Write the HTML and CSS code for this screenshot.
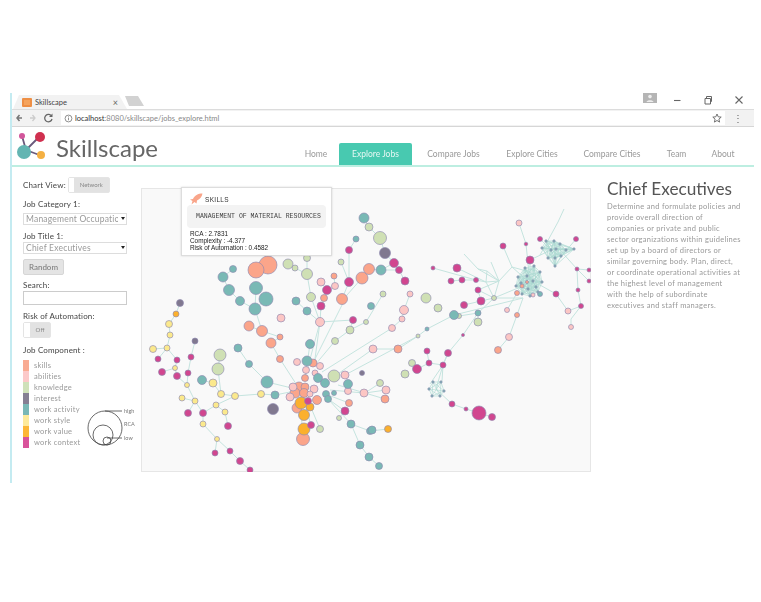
FILE: index.html
```html
<!DOCTYPE html>
<html lang="en">

<head>
    <meta charset="UTF-8">
    <title>Skillscape</title>
    <link rel="stylesheet" href="styles.css">
</head>

<body>

    <div class="window">
        <!-- Browser chrome -->
        <div class="tabstrip">
            <div class="tab">
                <span class="favicon"></span>
                <span class="tab-title">Skillscape</span>
                <span class="tab-close">×</span>
            </div>
            <div class="new-tab"></div>
            <div class="window-controls">
                <svg class="profile" viewBox="0 0 14 10"><rect width="14" height="10" fill="#b5b5b5"/><circle cx="7" cy="3.6" r="1.8" fill="#eee"/><path d="M3.5 9c.4-2.400 6.600-2.400 7 0z" fill="#eee"/></svg>
                <svg class="ctrl" viewBox="0 0 10 10"><path d="M2 5.500h6.500" stroke="#666" stroke-width="1.100"/></svg>
                <svg class="ctrl" viewBox="0 0 10 10"><path d="M2 3.500h5.500v5.500h-5.500zM3.500 3.500v-2h5v5h-1" fill="none" stroke="#666"/></svg>
                <svg class="ctrl" viewBox="0 0 10 10"><path d="M1.500 1.500l7 7M8.500 1.500l-7 7" stroke="#666" stroke-width="1.100"/></svg>
            </div>
        </div>
        <div class="toolbar">
            <svg class="nav-icons" viewBox="0 0 42 12"><path d="M7 6H2M4.500 3L2 6l2.500 3" fill="none" stroke="#777" stroke-width="1.500"/><path d="M20 6h-5M17.500 3L20 6l-2.500 3" fill="none" stroke="#ccc" stroke-width="1.300"/><path d="M36 3.500A3.700 3.700 0 1 0 37 7" fill="none" stroke="#666" stroke-width="1.300"/><path d="M37.500 1.500v3.500H34z" fill="#666"/></svg>
            <div class="urlbar">
                <svg class="info" viewBox="0 0 10 10"><circle cx="5" cy="5" r="3.800" fill="none" stroke="#666" stroke-width=".8"/><path d="M5 4v3M5 2.600v.8" stroke="#666" stroke-width=".8"/></svg>
                <span class="url"><b>localhost</b>:8080/skillscape/jobs_explore.html</span>
                <svg class="star" viewBox="0 0 10 10"><path d="M5 1l1.200 2.800 3 .3-2.300 2 .7 3L5 7.500 2.400 9.100l.7-3-2.300-2 3-.3z" fill="none" stroke="#666" stroke-width=".9"/></svg>
            </div>
            <span class="menu-dots">⋮</span>
        </div>

        <!-- App header -->
        <div class="header">
            <div class="brand">
                <svg class="logo" viewBox="0 0 32 30">
                    <path d="M5 5l4 14M23 5L9 19M9 19l16 6" stroke="#6a5a7c" stroke-width="1.800" fill="none"/>
                    <circle cx="5" cy="5" r="3" fill="#d2569b"/>
                    <circle cx="23" cy="6" r="5" fill="#d0304f"/>
                    <circle cx="7" cy="21" r="7" fill="#63b5b2"/>
                    <circle cx="24" cy="24" r="4" fill="#f4b042"/>
                </svg>
                <span class="brand-name">Skillscape</span>
            </div>
            <div class="nav">
                <a class="nav-link nav-home">Home</a>
                <a class="nav-link active">Explore Jobs</a>
                <a class="nav-link nav-cjobs">Compare Jobs</a>
                <a class="nav-link nav-ecities">Explore Cities</a>
                <a class="nav-link nav-ccities">Compare Cities</a>
                <a class="nav-link nav-team">Team</a>
                <a class="nav-link nav-about">About</a>
            </div>
        </div>

        <div class="main">
            <!-- Controls -->
            <div class="sidebar">
                <div class="chart-view">
                    <span class="field-label">Chart View:</span>
                    <div class="toggle toggle-network"><span class="knob"></span><span class="toggle-text">Network</span></div>
                </div>
                <div class="field-label gap-6">Job Category 1:</div>
                <div class="picker-wrap gap-4"><select class="picker"><option>Management Occupations</option></select></div>
                <div class="field-label gap-6">Job Title 1:</div>
                <div class="picker-wrap gap-1"><select class="picker"><option>Chief Executives</option></select></div>
                <button class="random-btn">Random</button>
                <div class="field-label gap-5">Search:</div>
                <input class="search gap-1" type="text">
                <div class="field-label gap-6">Risk of Automation:</div>
                <div class="toggle toggle-off gap-1"><span class="knob"></span><span class="toggle-text">Off</span></div>
                <div class="field-label gap-7">Job Component :</div>
                <div class="legend">
                    <ul class="legend-list">
                        <li><i class="swatch c-skills"></i>skills</li>
                        <li><i class="swatch c-abilities"></i>abilities</li>
                        <li><i class="swatch c-knowledge"></i>knowledge</li>
                        <li><i class="swatch c-interest"></i>interest</li>
                        <li><i class="swatch c-activity"></i>work activity</li>
                        <li><i class="swatch c-style"></i>work style</li>
                        <li><i class="swatch c-value"></i>work value</li>
                        <li><i class="swatch c-context"></i>work context</li>
                    </ul>
                    <svg class="size-key" viewBox="0 0 54 40">
                        <g fill="none" stroke="#444" stroke-width=".8">
                            <circle cx="18" cy="20" r="17"/>
                            <circle cx="16" cy="27" r="10"/>
                            <circle cx="20" cy="33" r="4"/>
                            <path d="M18 3h17M20 30h15"/>
                        </g>
                        <text x="37" y="5">high</text>
                        <text x="37" y="18">RCA</text>
                        <text x="37" y="32">low</text>
                    </svg>
                </div>
            </div>

            <!-- Network -->
            <div class="chart">
                <svg id="graph" class="graph" viewBox="141 188 450 284"></svg>
                <div class="tip">
                    <div class="tip-head">
                        <svg class="rocket" viewBox="0 0 14 12"><path d="M13.500.5C9 .5 5.500 2.500 4 6L1 6.500 3.500 8 2.500 11.500 5.500 9l2 1.500.5-3C11 6 13 4 13.500.5z" fill="#f9a58a"/></svg>
                        <span>SKILLS</span>
                    </div>
                    <div class="tip-box">MANAGEMENT OF MATERIAL RESOURCES</div>
                    <div class="tip-stats">RCA : 2.7831<br>Complexity : -4.377<br>Risk of Automation : 0.4582</div>
                </div>
            </div>

            <!-- Description -->
            <div class="details">
                <h2 class="job-title">Chief Executives</h2>
                <p class="job-text">Determine and formulate policies and<br>provide overall direction of<br>companies or private and public<br>sector organizations within guidelines<br>set up by a board of directors or<br>similar governing body. Plan, direct,<br>or coordinate operational activities at<br>the highest level of management<br>with the help of subordinate<br>executives and staff managers.</p>
            </div>
        </div>
    </div>

    <script src="graph.js"></script>
</body>

</html>
```
FILE: styles.css
```css
* {
    box-sizing: border-box;
}

body {
    font-family: Lato, Arial, sans-serif;
    margin: 0;
    padding: 93px 0 0 10px;
    background-color: #fff;
    color: #555;
}

.window {
    width: 744px;
    height: 390px;
    border-left: 2px solid #c4ebf1;
    filter: blur(0.7px);
}

/* Browser chrome */
.tabstrip {
    display: flex;
    align-items: flex-end;
    height: 16px;
    position: relative;
}

.tab {
    display: flex;
    align-items: center;
    width: 114px;
    height: 14px;
    margin-left: 1px;
    padding: 0 9px 0 9px;
    background-color: #f2f2f2;
    clip-path: polygon(0 100%, 6px 0, 106px 0, 100% 100%);
    font-size: 7.5px;
    color: #444;
}

.favicon {
    width: 10px;
    height: 9px;
    margin-right: 3px;
    background-color: #f5a45e;
    border: 2px solid #ee8f45;
    border-radius: 1px;
}

.tab-title {
    flex: 1;
}

.tab-close {
    font-size: 9px;
    color: #666;
}

.new-tab {
    width: 19px;
    height: 10px;
    margin: 0 0 3px -2px;
    background-color: #d2d2d2;
    clip-path: polygon(0 0, 13px 0, 100% 100%, 4px 100%);
}

.window-controls {
    position: absolute;
    top: 0;
    right: 0;
    display: flex;
    align-items: flex-start;
    padding-right: 10px;
}

.profile {
    width: 14px;
    height: 10px;
    margin-right: 15px;
}

.ctrl {
    width: 10px;
    height: 10px;
    margin: 2px 0 0 0;
}

.ctrl + .ctrl {
    margin-left: 21px;
}

.toolbar {
    display: flex;
    align-items: center;
    height: 18px;
    background-color: #f2f2f2;
    border-top: 1px solid #dcdcdc;
    border-bottom: 1px solid #d6d6d6;
}

.nav-icons {
    width: 42px;
    height: 12px;
    margin-left: 3px;
    margin-right: 4px;
}

.urlbar {
    display: flex;
    align-items: center;
    width: 664px;
    height: 14px;
    padding: 0 3px;
    background-color: #fff;
    font-size: 7.5px;
    color: #888;
}

.info {
    width: 9px;
    height: 9px;
    margin-right: 2px;
}

.url {
    flex: 1;
}

.url b {
    font-weight: 400;
    color: #333;
}

.star {
    width: 10px;
    height: 10px;
}

.menu-dots {
    margin-left: 8px;
    font-size: 10px;
    line-height: 10px;
    color: #666;
}

/* App header */
.header {
    display: flex;
    justify-content: space-between;
    align-items: flex-end;
    height: 40px;
    border-bottom: 2px solid #bdeee1;
}

.brand {
    display: flex;
    align-items: center;
    height: 36px;
    margin-left: 5px;
}

.logo {
    width: 32px;
    height: 30px;
    margin-bottom: 2px;
}

.brand-name {
    margin-left: 7px;
    font-size: 24px;
    font-weight: 400;
    color: #666;
}

.nav {
    display: flex;
    height: 22px;
    margin-right: 19px;
}

.nav-link {
    display: flex;
    align-items: center;
    justify-content: center;
    font-size: 8.5px;
    color: #999;
}

.active {
    width: 73px;
    margin-left: 11px;
    background-color: #48c9b0;
    border-radius: 2px 2px 0 0;
    color: #e6f7f3;
}

.nav-home { width: 24px; }
.nav-cjobs { width: 55px; margin-left: 14px; }
.nav-ecities { width: 52px; margin-left: 25px; }
.nav-ccities { width: 58px; margin-left: 25px; }
.nav-team { width: 21px; margin-left: 25px; }
.nav-about { width: 24px; margin-left: 24px; }

/* Layout */
.main {
    display: flex;
    align-items: flex-start;
    height: 316px;
}

.sidebar {
    width: 129px;
    padding: 10px 0 0 11px;
}

.field-label {
    display: block;
    font-size: 8px;
    line-height: 10px;
    letter-spacing: 0.15px;
    color: #444;
}

.gap-1 { margin-top: 1px; }
.gap-4 { margin-top: 4px; }
.gap-5 { margin-top: 5px; }
.gap-6 { margin-top: 6px; }
.gap-7 { margin-top: 7px; }

.chart-view {
    display: flex;
    align-items: center;
    height: 16px;
}

.toggle {
    display: flex;
    height: 16px;
    background-color: #e2e2e2;
    border: 1px solid #e4e4e4;
    border-radius: 2px;
}

.toggle-network {
    width: 42px;
    margin-left: 2px;
}

.toggle-off {
    width: 28px;
}

.knob {
    width: 5px;
    background-color: #fff;
}

.toggle-off .knob {
    width: 6px;
}

.toggle-text {
    flex: 1;
    font-size: 6px;
    line-height: 14px;
    text-align: center;
    color: #888;
}

.picker-wrap {
    position: relative;
    width: 104px;
    height: 12px;
}

.picker-wrap::after {
    content: "";
    position: absolute;
    top: 4px;
    right: 2px;
    border: 2px solid transparent;
    border-top: 3px solid #222;
    border-bottom: 0;
}

.picker {
    display: block;
    width: 100%;
    height: 12px;
    padding: 0 8px 0 2px;
    appearance: none;
    background-color: #fff;
    border: 1px solid #ddd;
    border-radius: 0;
    font-family: inherit;
    font-size: 8.5px;
    letter-spacing: 0.2px;
    color: #999;
}

.random-btn {
    display: block;
    width: 41px;
    height: 16px;
    margin-top: 5px;
    padding: 0;
    background-color: #e4e4e4;
    border: 1px solid #d6d6d6;
    border-radius: 2px;
    font-family: inherit;
    font-size: 8px;
    color: #777;
}

.search {
    display: block;
    width: 104px;
    height: 14px;
    padding: 0;
    background-color: #fff;
    border: 1px solid #ccc;
}

.legend {
    display: flex;
    align-items: flex-end;
    margin-top: 5px;
}

.legend-list {
    width: 65px;
    margin: 0;
    padding: 0;
    list-style: none;
}

.legend-list li {
    display: flex;
    align-items: center;
    height: 11px;
    font-size: 7.5px;
    letter-spacing: 0.25px;
    color: #999;
}

.swatch {
    width: 6px;
    height: 11px;
    margin-right: 5px;
}

.c-skills { background-color: #f9ab92; }
.c-abilities { background-color: #fcc9c9; }
.c-knowledge { background-color: #cfe1b9; }
.c-interest { background-color: #857f93; }
.c-activity { background-color: #79b8b6; }
.c-style { background-color: #fdea9b; }
.c-value { background-color: #fcb737; }
.c-context { background-color: #d9539b; }

.size-key {
    width: 54px;
    height: 40px;
    flex-shrink: 0;
}

.size-key text {
    font-size: 5.5px;
    fill: #777;
}

/* Network */
.chart {
    position: relative;
    width: 450px;
    height: 284px;
    margin-top: 21px;
    background-color: #f9f9f9;
    border: 1px solid #e6e6e6;
}

.graph {
    position: absolute;
    top: -1px;
    left: -1px;
    width: 450px;
    height: 284px;
}

.graph .edge {
    fill: none;
    stroke: #c5e4df;
    stroke-width: 1;
}

.graph .mesh {
    stroke: #a9d8d0;
    stroke-width: 0.6;
}

.graph circle {
    stroke: #8f8ab0;
    stroke-opacity: 0.65;
    stroke-width: 1;
}

.graph .sk { fill: #fba58a; }
.graph .ab { fill: #fcc6c4; }
.graph .kn { fill: #cfe0b4; }
.graph .in { fill: #80788f; }
.graph .ac { fill: #79b9b5; }
.graph .st { fill: #fbe98c; }
.graph .va { fill: #fbb02d; }
.graph .co { fill: #d1468f; }

.tip {
    position: absolute;
    top: -2px;
    left: 39px;
    width: 151px;
    height: 69px;
    padding: 5px;
    background-color: #fff;
    border: 1px solid #ddd;
    box-shadow: 0 0 2px rgba(0, 0, 0, 0.15);
}

.tip-head {
    display: flex;
    align-items: center;
    height: 12px;
    font-family: "Liberation Sans", Arial, sans-serif;
    font-size: 6.5px;
    letter-spacing: 0.3px;
    color: #333;
}

.rocket {
    width: 14px;
    height: 12px;
    margin: 0 2px 0 2px;
}

.tip-box {
    height: 23px;
    padding: 0 9px;
    background-color: #f3f3f3;
    border-radius: 4px;
    font-family: "Liberation Mono", monospace;
    font-size: 6.5px;
    line-height: 23px;
    color: #444;
    white-space: nowrap;
}

.tip-stats {
    margin: 2px 0 0 3px;
    font-family: "Liberation Sans", Arial, sans-serif;
    font-size: 6.4px;
    line-height: 7px;
    color: #222;
}

/* Description */
.details {
    margin: 11px 0 0 16px;
}

.job-title {
    margin: 0;
    font-size: 17.2px;
    font-weight: 400;
    line-height: 22px;
    color: #555;
}

.job-text {
    margin: 1px 0 0 0;
    font-size: 7.5px;
    line-height: 11px;
    letter-spacing: 0.28px;
    color: #999;
    white-space: nowrap;
}
```
FILE: graph.js
```js
// Node lists are [x, y, r], in page coordinates (the svg viewBox uses the same ones)
const nodes = {
    sk: [[268,265,9],[256,270,8],[249,326,5],[262,331,5.5],[280,337,3],[271,343,5],[280,359,3.5],[324,298,3.5],[334,276,3],[342,299,5.5],[362,278,6],[369,269,5.5],[398,349,4],[498,350,3.5],[385,399,4],[313,363,4],[305,378,3.5],[299,387,5],[305,387,4],[295,393,5],[304,393,4.5],[317,400,4.5],[297,408,5],[303,439,6.5],[349,403,3.5],[517,293,2.5],[517,315,2.5],[522,286,2],[527,282,1.5]],
    ab: [[281,318,4],[320,322,4.5],[321,282,4],[335,286,3.5],[410,294,3],[404,310,4.5],[402,319,3],[392,328,3.5],[373,349,4],[297,362,3.5],[320,366,3.5],[306,370,3.5],[315,373,3],[345,375,4],[348,391,3.5],[364,393,4],[293,387,4],[314,389,4],[310,394,3],[290,397,4],[386,390,4],[519,223,3],[533,295,2],[507,310,2.5],[509,337,3.5],[568,311,3],[571,327,2.5]],
    kn: [[288,264,5],[295,268,3],[307,258,3.5],[307,274,5.5],[311,297,4.5],[341,262,3],[366,322,2.5],[350,330,4],[369,227,4],[380,238,6.5],[383,294,3],[426,298,5],[438,308,4],[459,316,2.5],[418,336,2],[478,322,4],[494,298,2.5],[335,341,3.5],[334,376,6],[320,429,3.5],[339,418,2.5],[218,369,6],[220,355,6],[412,363,3.5],[405,374,4],[380,383,3.5]],
    in: [[180,303,3.5],[195,341,3],[273,409,5.5],[362,373,2.5],[385,253,5.5]],
    ac: [[233,269,3.5],[223,277,5],[229,290,5.5],[256,288,6.5],[266,299,7],[240,301,4.5],[255,309,6],[296,301,4],[307,311,4],[356,239,3],[364,218,5],[371,306,3.5],[381,270,5],[454,315,4.5],[427,329,2],[478,313,3],[202,380,4.5],[238,348,4],[249,364,3.5],[267,382,6],[275,395,4],[310,344,4.5],[307,361,5],[318,378,4.5],[325,383,4.5],[348,384,4.5],[334,393,2.5],[326,394,3.5],[328,399,3.5],[351,424,4],[370,431,3.5],[360,445,4],[369,457,4],[379,466,3.5],[372,430,4],[540,294,2.5]],
    st: [[169,324,3.5],[170,335,3],[153,349,3.5],[167,348,3],[175,368,2.5],[187,385,2.5],[182,398,3],[195,401,3],[203,424,3],[217,439,2.5],[225,412,3],[216,405,3],[221,394,3.5],[235,396,3.5],[213,383,4],[261,394,3.5]],
    va: [[176,314,3],[301,403,6],[310,407,4],[304,415,5.5],[304,429,6],[388,429,3.5]],
    co: [[349,250,3.5],[349,282,4.5],[327,290,4.5],[321,306,4],[353,320,3.5],[158,359,3],[177,360,3],[191,357,3],[162,372,3.5],[177,376,3.5],[188,373,3],[188,413,3.5],[203,413,3.5],[215,453,3],[230,451,3],[240,461,3.5],[250,470,3],[228,426,3.5],[308,401,3.5],[311,425,3.5],[345,411,4],[394,263,4.5],[399,270,3.5],[405,281,4],[464,305,3.5],[481,301,4],[478,290,3],[451,281,3],[462,280,3],[476,280,2.5],[457,268,4],[433,268,2],[503,246,3],[526,244,1.8],[530,260,4],[540,239,2.5],[576,239,2.5],[577,269,2],[589,270,2],[589,281,2],[578,290,2],[581,306,2.5],[556,294,3],[463,335,1.5],[427,351,3],[448,353,3.5],[429,363,3],[443,365,3],[417,369,4.5],[452,404,3],[466,409,2],[479,413,7],[492,417,3.5]]
};

// Chains of points joined by a line
const edges = [
    [300,390,275,395,261,394,235,396,216,405,203,413,203,424,217,439,230,451,240,461,250,470],
    [217,439,215,453],[235,396,221,394,213,383,202,380],[221,394,218,369,220,355],[216,405,225,412,228,426],
    [203,413,195,401,182,398],[188,413,195,401,187,385,177,376,175,368,177,360,167,348,170,335,169,324,176,314,180,303],
    [167,348,153,349],[167,348,158,359],[175,368,162,372],[187,385,188,373,191,357,195,341],
    [300,390,267,382,249,364,238,348],[300,390,280,359,271,343,280,337,262,331,249,326],[255,309,262,331],
    [223,277,233,269],[223,277,229,290,240,301,255,309,266,299],[256,288,255,309],
    [305,378,320,322,307,311,296,301],[320,322,321,306,324,298,327,290,321,282],[327,290,335,286,334,276],
    [320,322,311,297,307,274,307,258],[307,274,295,268,288,264],[314,366,320,322],[310,344,305,378],
    [313,363,347,295,362,278,369,269,381,270,394,263,385,253,380,238,369,227,364,218],[381,270,399,270,405,281],
    [342,299,349,282,341,262],[349,282,349,250,356,239],[320,322,353,320],[353,320,350,330],
    [315,365,335,341,350,330,366,322,383,294],[322,372,392,328,402,319,404,310,410,294],
    [335,376,373,349,398,349,418,336,427,329,454,315,459,316,478,313,494,298],[345,375,418,336],[478,313,478,322],
    [478,313,463,335,448,353,443,365,436,389],[443,365,429,363,417,369],[429,363,427,351],[436,389,452,404,466,409,479,413,492,417],
    [338,385,365,393,380,383],[365,393,386,390],[365,393,385,399],[330,390,364,393],[328,395,349,403],[328,399,345,411,339,418],
    [328,399,351,424,360,445,369,457,379,466],[351,424,370,431,388,429],[300,395,303,439],[305,405,311,425],[312,410,320,429],
    [499,281,478,269,464,254],[499,281,491,262],[499,281,487,271],[499,281,486,282,476,280,462,280,451,281],[457,268,486,282],[433,268,476,280],
    [499,281,478,290,481,301,464,305],[499,281,512,267,530,283],[481,301,494,298,523,298],[494,298,530,283],[486,282,494,298],[478,290,494,298],
    [478,269,487,271,486,282],[499,281,494,298],[454,315,523,298],[530,283,530,260,551,250],[526,244,530,283],[526,244,519,223],[503,246,512,267],
    [512,267,530,272],[564,209,558,222,540,255],[540,239,551,250],[576,239,560,258],[560,250,577,269,589,270],[577,269,589,281],
    [577,269,578,290,581,306,571,319,571,327],[581,306,568,311,556,294,540,285],[507,310,517,293],[517,315,523,298],[509,337,517,315],[498,350,509,337],
    [443,365,448,353],[443,365,430,384],[443,365,442,381]
];

// Dense clusters: every dot is joined to every other one
const clusters = [
    [[518,277],[525,268],[534,266],[540,272],[542,282],[538,292],[530,296],[522,294],[516,286],[527,276],[533,281],[528,289],[536,287],[521,283]],
    [[542,248],[546,241],[554,241],[560,244],[566,250],[574,249],[561,256],[555,258],[548,258],[551,250],[556,249],[555,266]],
    [[429,389],[433,382],[441,382],[444,391],[440,396],[432,396]]
];

const svg = document.getElementById('graph');

function add(tag, attrs, cls) {
    const el = document.createElementNS('http://www.w3.org/2000/svg', tag);
    for (const k in attrs) el.setAttribute(k, attrs[k]);
    el.setAttribute('class', cls);
    svg.appendChild(el);
}

edges.forEach(pts => add('polyline', { points: pts.join(' ') }, 'edge'));

clusters.forEach(dots => {
    dots.forEach((a, i) => {
        dots.slice(i + 1).forEach(b => {
            add('line', { x1: a[0], y1: a[1], x2: b[0], y2: b[1] }, 'edge mesh');
        });
    });
});

for (const type in nodes) {
    nodes[type].forEach(n => add('circle', { cx: n[0], cy: n[1], r: n[2] }, type));
}

clusters.forEach(dots => {
    dots.forEach(d => add('circle', { cx: d[0], cy: d[1], r: 1.2 }, 'ac'));
});
```
